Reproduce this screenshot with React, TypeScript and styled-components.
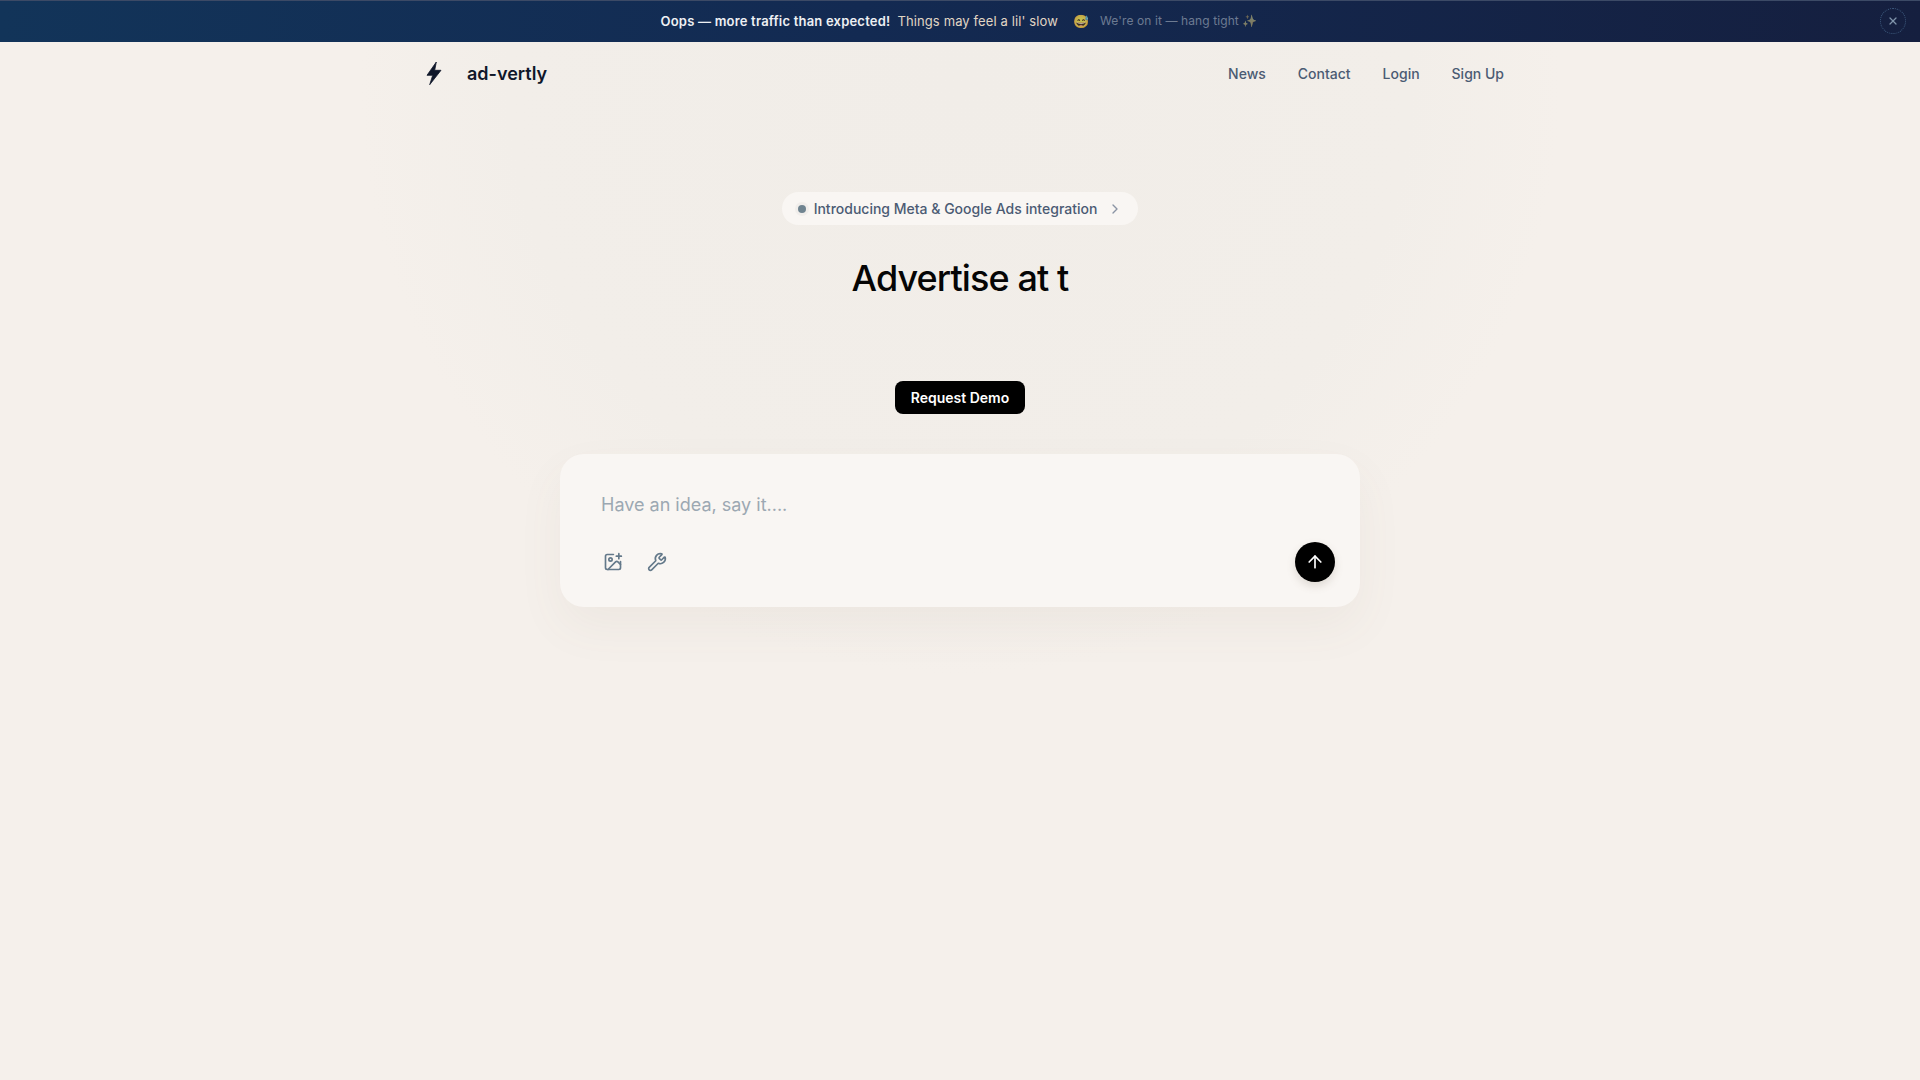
import * as React from 'react'
import styled, { createGlobalStyle } from 'styled-components'
import { ArrowUp, ChevronRight, ImagePlus, Wrench, X } from 'lucide-react'

const GlobalStyle = createGlobalStyle`
  html, body {
    margin: 0;
    padding: 0;
    background: #f5f0eb;
    font-family: Inter, "Noto Sans", sans-serif;
  }
  * {
    box-sizing: border-box;
  }
`

const Page = styled.div`
  min-height: 1080px;
  display: flex;
  flex-direction: column;
  overflow: hidden;
  background: radial-gradient(ellipse 600px 590px at 50% 85px, #f1ede8 0%, #f2eee9 75%, #f5f0eb 100%);
`

const Banner = styled.div`
  position: relative;
  height: 42px;
  flex-shrink: 0;
  padding: 0 2px 2px 0;
  display: flex;
  align-items: center;
  justify-content: center;
  background: linear-gradient(90deg, #123459 0%, #132a52 45%, #151f3f 100%);
  border-top: 1px solid #3c4a66;
  font-size: 13px;
  white-space: nowrap;
`

const BannerStrong = styled.span`
  color: #eef0f3;
  font-weight: 600;
  letter-spacing: 0.2px;
`

const BannerSlow = styled.span`
  color: #e0d6c4;
  margin-left: 7px;
  letter-spacing: 0.12px;
`

const BannerEmoji = styled.span`
  margin-left: 15px;
  font-size: 13px;
  opacity: 0.75;
  filter: sepia(0.5) saturate(1.4);
`

const BannerQuiet = styled.span`
  color: #6d7b92;
  font-size: 12px;
  margin-left: 11px;
  letter-spacing: 0.1px;
`

const BannerSparkle = styled.span`
  opacity: 0.45;
  filter: sepia(0.6);
`

const BannerClose = styled.button`
  position: absolute;
  top: 7px;
  right: 14px;
  width: 26px;
  height: 26px;
  padding: 0;
  display: flex;
  align-items: center;
  justify-content: center;
  color: #8094ab;
  background: transparent;
  border: 1px dotted #3f5d80;
  border-radius: 50%;
`

const Nav = styled.nav`
  width: 1152px;
  margin: 0 auto;
  height: 63px;
  padding: 0 32px;
  display: flex;
  align-items: center;
  justify-content: space-between;
`

const Brand = styled.div`
  display: flex;
  align-items: center;
  gap: 25px;
  padding-left: 10px;
  color: #0f172a;
  font-size: 18px;
  font-weight: 600;
`

const BoltMark = styled.svg`
  width: 16px;
  height: 25px;
  fill: #0f172a;
  stroke: #0f172a;
  stroke-width: 0.8;
  stroke-linejoin: round;
`

const NavLinks = styled.div`
  display: flex;
  align-items: center;
  gap: 32px;
`

const NavLink = styled.a`
  color: #4b5b73;
  font-size: 14px;
  font-weight: 500;
`

const Hero = styled.main`
  display: flex;
  flex-direction: column;
  align-items: center;
  padding-top: 87px;
`

const Pill = styled.div`
  height: 33px;
  padding: 0 15px 0 16px;
  display: flex;
  align-items: center;
  border-radius: 17px;
  background: #f9f6f3;
  color: #4b5b73;
  font-size: 14px;
  font-weight: 500;
`

const PillDot = styled.span`
  width: 8px;
  height: 8px;
  margin-right: 8px;
  border-radius: 50%;
  background: #708490;
  box-shadow: 0 0 0 3px #f1eeeb;
`

const PillChevron = styled(ChevronRight)`
  margin-left: 10px;
  color: #8a94a3;
`

const Title = styled.h1`
  margin: 0;
  height: 44px;
  margin-top: 31px;
  color: #050505;
  font-size: 36px;
  line-height: 44px;
  font-weight: 500;
  letter-spacing: -0.9px;
`

const DemoButton = styled.button`
  margin-top: 81px;
  width: 130px;
  height: 33px;
  padding: 0;
  border: none;
  border-radius: 8px;
  background: #000;
  color: #fff;
  font-family: inherit;
  font-size: 14px;
  font-weight: 600;
`

const PromptCard = styled.div`
  width: 800px;
  height: 153px;
  margin-top: 40px;
  padding: 37px 25px 25px 41px;
  display: flex;
  flex-direction: column;
  justify-content: space-between;
  border-radius: 24px;
  background: #f9f6f3;
  box-shadow: 0 20px 48px rgba(120, 105, 90, 0.06);
`

const Placeholder = styled.div`
  color: #9ca8b2;
  font-size: 18px;
  line-height: 28px;
  height: 28px;
`

const PromptTools = styled.div`
  display: flex;
  align-items: center;
  justify-content: space-between;
`

const ToolGroup = styled.div`
  display: flex;
  align-items: center;
  gap: 24px;
  padding-left: 2px;
  color: #64798a;
`

const SendButton = styled.button`
  width: 40px;
  height: 40px;
  padding: 0;
  display: flex;
  align-items: center;
  justify-content: center;
  border: none;
  border-radius: 50%;
  background: #000;
  color: #fff;
  box-shadow: 0 4px 8px rgba(120, 105, 90, 0.2);
`

export default function App() {
  return (
    <Page>
      <GlobalStyle />
      <Banner>
        <BannerStrong>Oops — more traffic than expected!</BannerStrong>
        <BannerSlow>Things may feel a lil' slow</BannerSlow>
        <BannerEmoji>😅</BannerEmoji>
        <BannerQuiet>
          We're on it — hang tight <BannerSparkle>✨</BannerSparkle>
        </BannerQuiet>
        <BannerClose>
          <X size={12} strokeWidth={2.5} />
        </BannerClose>
      </Banner>
      <Nav>
        <Brand>
          <BoltMark viewBox="-1 -1 16 25">
            <polygon points="9.3,0 0,13.3 5.7,13.3 2.7,22.7 14,8.3 7.7,8.3" />
          </BoltMark>
          ad-vertly
        </Brand>
        <NavLinks>
          <NavLink>News</NavLink>
          <NavLink>Contact</NavLink>
          <NavLink>Login</NavLink>
          <NavLink>Sign Up</NavLink>
        </NavLinks>
      </Nav>
      <Hero>
        <Pill>
          <PillDot />
          Introducing Meta &amp; Google Ads integration
          <PillChevron size={16} />
        </Pill>
        <Title>Advertise at t</Title>
        <DemoButton>Request Demo</DemoButton>
        <PromptCard>
          <Placeholder>Have an idea, say it....</Placeholder>
          <PromptTools>
            <ToolGroup>
              <ImagePlus size={20} />
              <Wrench size={20} />
            </ToolGroup>
            <SendButton>
              <ArrowUp size={20} strokeWidth={2} />
            </SendButton>
          </PromptTools>
        </PromptCard>
      </Hero>
    </Page>
  )
}
